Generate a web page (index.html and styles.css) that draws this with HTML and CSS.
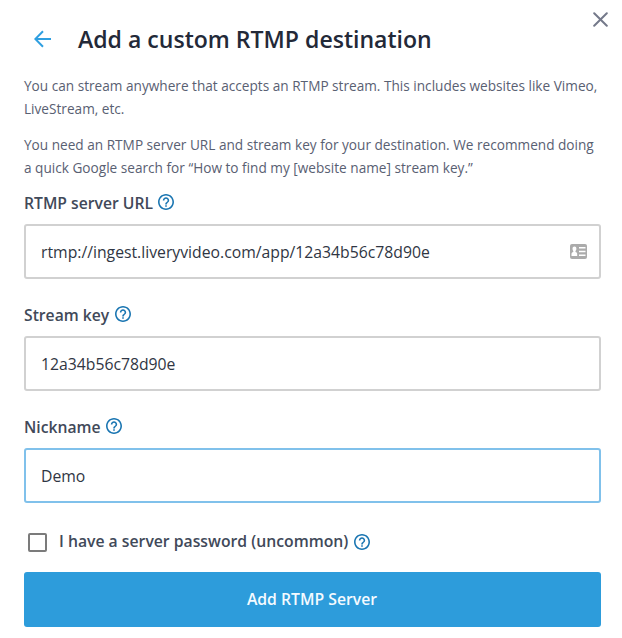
FILE: index.html
```html
<!DOCTYPE html>
<html lang="en">
<head>
<meta charset="utf-8">
<title>Add a custom RTMP destination</title>
<link rel="stylesheet" href="styles.css">
</head>
<body>
<svg class="defs" width="0" height="0">
  <symbol id="help" viewBox="2 2 20 20"><path d="M11 18h2v-2h-2v2zm1-16C6.480 2 2 6.480 2 12s4.480 10 10 10 10-4.480 10-10S17.520 2 12 2zm0 18c-4.410 0-8-3.590-8-8s3.590-8 8-8 8 3.590 8 8-3.590 8-8 8zm0-14c-2.210 0-4 1.790-4 4h2c0-1.100.9-2 2-2s2 .9 2 2c0 2-3 1.750-3 5h2c0-2.250 3-2.500 3-5 0-2.210-1.790-4-4-4z"/></symbol>
</svg>
<main class="dialog">
  <button class="close" aria-label="Close"><svg width="15" height="15" viewBox="0 0 15 15"><path d="M1.200 1.200l12.600 12.600M13.800 1.200L1.200 13.800"/></svg></button>
  <header class="header">
    <svg class="back" width="17" height="18" viewBox="0 0 17 18"><path d="M17 9H1.500M9 1.300L1.300 9L9 16.700"/></svg>
    <h1 class="title">Add a custom RTMP destination</h1>
  </header>
  <p class="copy">You can stream anywhere that accepts an RTMP stream. This includes websites like Vimeo,<br>LiveStream, etc.</p>
  <p class="copy">You need an RTMP server URL and stream key for your destination. We recommend doing<br>a quick Google search for “How to find my [website name] stream key.”</p>
  <form class="form">
    <div class="field">
      <div class="label"><label for="url">RTMP server URL</label><svg class="help"><use href="#help"/></svg></div>
      <div class="control">
        <input class="input" id="url" value="rtmp://ingest.liveryvideo.com/app/12a34b56c78d90e">
        <svg class="card" width="17" height="15" viewBox="0 0 17 15"><rect width="17" height="15" rx="2" fill="#ababab"/><path fill="#fff" d="M4.500 2.500c1.200 0 1.900.9 1.900 2.200 0 1-.4 1.800-.9 2.200v1.200c1.200.4 1.700.9 1.700 2.100V12H1.500v-1.800c0-1.200.6-1.700 1.800-2.100V6.900c-.5-.4-.8-1.200-.8-2.200 0-1.300.8-2.200 2-2.200zM9 3h6.500v1.600H9zM9 6.700h6.500v1.600H9zM9 10.400h6.500V12H9z"/></svg>
      </div>
    </div>
    <div class="field">
      <div class="label"><label for="key">Stream key</label><svg class="help"><use href="#help"/></svg></div>
      <div class="control"><input class="input" id="key" value="12a34b56c78d90e"></div>
    </div>
    <div class="field">
      <div class="label"><label for="nick">Nickname</label><svg class="help"><use href="#help"/></svg></div>
      <div class="control active"><input class="input" id="nick" value="Demo"></div>
    </div>
    <div class="option"><input class="check" type="checkbox" id="pw"><label for="pw">I have a server password (uncommon)</label><svg class="help"><use href="#help"/></svg></div>
    <button class="submit" type="button">Add RTMP Server</button>
  </form>
</main>
</body>
</html>
```
FILE: styles.css
```css
* { box-sizing: border-box; }
body { margin: 0; background: #fff; font-family: "Open Sans", sans-serif; overflow: hidden; }
.defs { position: absolute; }
.dialog { position: relative; width: 622px; height: 638px; padding: 21px 21px 0 24px; }
.close { position: absolute; top: 12px; right: 14px; width: 15px; height: 15px; padding: 0; border: 0; background: none; }
.close svg { display: block; fill: none; stroke: #74798a; stroke-width: 2; stroke-linecap: round; }
.header { display: flex; align-items: center; height: 36px; padding-left: 10px; gap: 27px; margin-bottom: 17px; }
.back { fill: none; stroke: #2f9fe0; stroke-width: 2; margin-top: -1px; }
.title { margin: 0; font-size: 23.070px; font-weight: 600; line-height: 36px; color: #232938; white-space: nowrap; }
.copy { margin: 0 0 13px; font-size: 13.640px; line-height: 23px; color: #596072; white-space: nowrap; }
.form { margin-top: -1px; }
.field { height: 112px; }
.label { display: flex; align-items: center; gap: 5.500px; height: 24px; margin-bottom: 9px; font-size: 15.700px; font-weight: 600; color: #414959; white-space: nowrap; }
.help { width: 16px; height: 16px; fill: #1b76b2; flex: none; }
.label .help { margin-top: -2px; }
.control { display: flex; align-items: center; width: 577px; height: 55px; padding: 0 12px 0 15px; border: 2px solid #d1d1d1; border-radius: 3px; }
.active { border-color: #80c1eb; }
.input { flex: 1; min-width: 0; padding: 0; border: 0; outline: 0; background: none; font: 15.760px "Open Sans", sans-serif; color: #303643; }
.option { display: flex; align-items: center; height: 24px; margin-top: 3px; padding-left: 4px; font-size: 15.760px; font-weight: 600; color: #414959; white-space: nowrap; }
.option label { margin-top: -2px; }
.option .help { margin-left: 5.500px; }
.check { appearance: none; width: 19px; height: 19px; margin: 0 12px 0 0; border: 2px solid #7b7b7b; border-radius: 2px; background: #fff; }
.submit { display: block; width: 577px; height: 55px; margin-top: 18px; padding: 0 1px 2px 0; border: 0; border-radius: 3px; background: #2d9cdb; color: #f4faff; font: 600 15.750px "Open Sans", sans-serif; }
```
